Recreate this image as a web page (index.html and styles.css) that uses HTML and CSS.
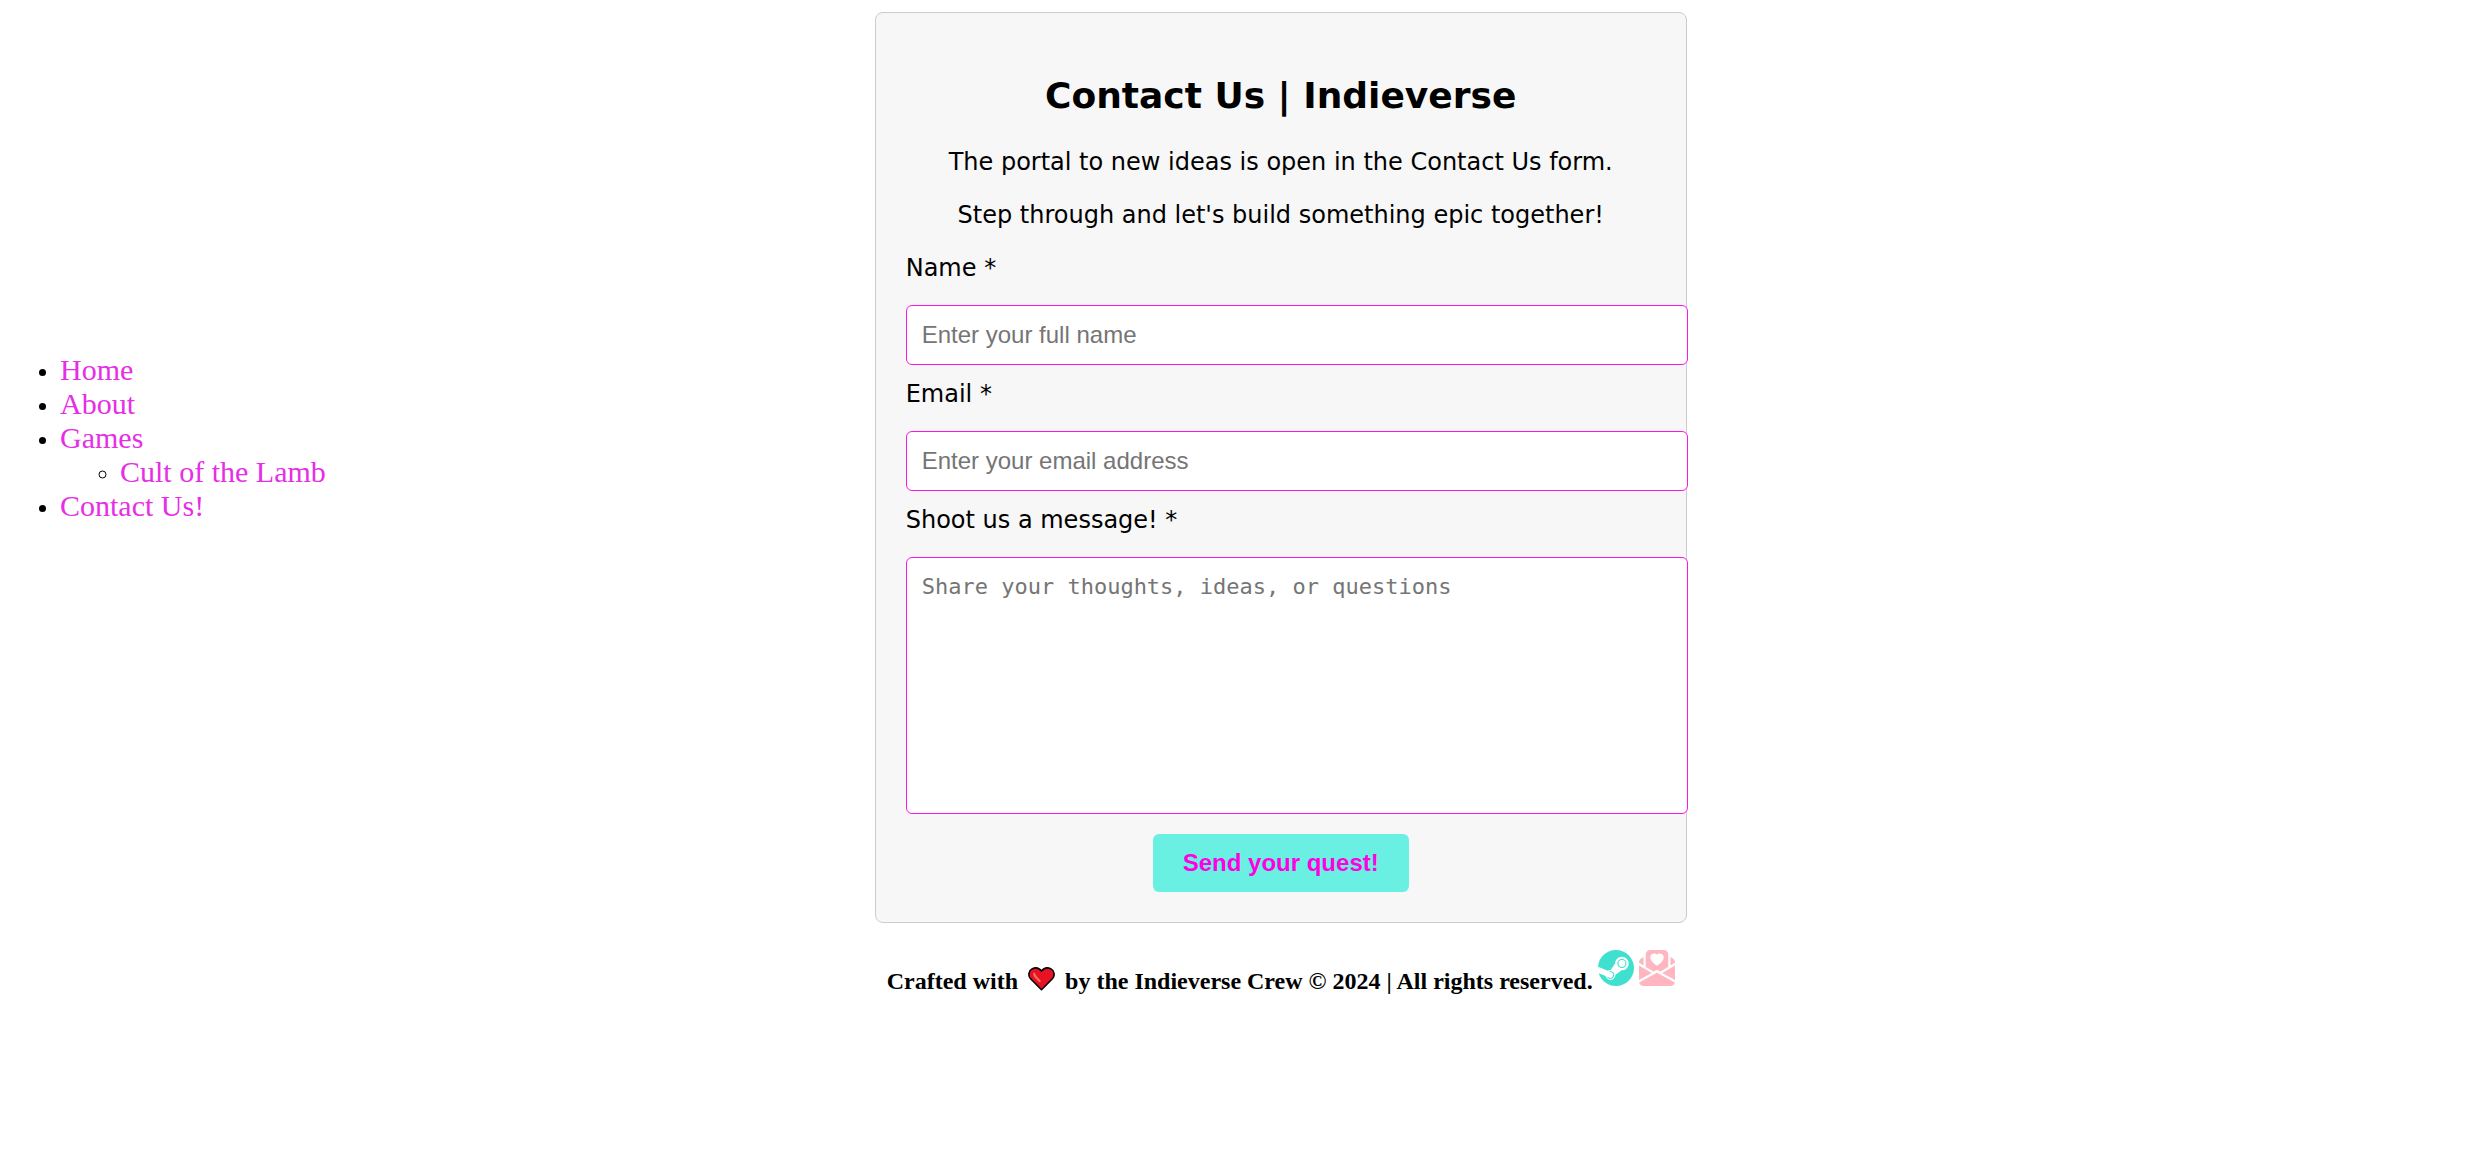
FILE: index.html
```html
<!DOCTYPE html>
<html lang="en">
<head>
  <meta charset="utf-8">
  <meta name="viewport" content="width=device-width, initial-scale=1">
  <title>Contact Us | Indieverse</title>
  <link rel="stylesheet" href="styles.css">
</head>
<body>
  <div class="page">
    <nav class="site-nav">
      <ul>
        <li><a href="#home">Home</a></li>
        <li><a href="#about">About</a></li>
        <li><a href="#games">Games</a>
          <ul>
            <li><a href="#cult-of-the-lamb">Cult of the Lamb</a></li>
          </ul>
        </li>
        <li><a href="#contact">Contact Us!</a></li>
      </ul>
    </nav>

    <main class="card">
      <h1>Contact Us | Indieverse</h1>
      <p>The portal to new ideas is open in the Contact Us form.</p>
      <p>Step through and let's build something epic together!</p>
      <form class="contact-form">
        <label for="name">Name *</label>
        <input class="field" type="text" id="name" placeholder="Enter your full name" required>
        <label for="email">Email *</label>
        <input class="field" type="email" id="email" placeholder="Enter your email address" required>
        <label for="message">Shoot us a message! *</label>
        <textarea class="field message" id="message" placeholder="Share your thoughts, ideas, or questions" required></textarea>
        <button class="send" type="submit">Send your quest!</button>
      </form>
    </main>

    <footer class="site-footer">
      <span>Crafted with</span>
      <svg class="heart" viewBox="0 0 27 24" role="img" aria-label="love">
        <path d="M13.500 22.700 2.600 11.800C-.3 8.700.7 3.600 4 1.900 7.400.2 11.200 1 13.500 4.100 15.800 1 19.600.2 23 1.900c3.300 1.700 4.300 6.800 1.400 9.900z" fill="#e81224" stroke="#000" stroke-width="1.600" stroke-linejoin="round"/>
        <path d="M6.200 6.800c.1 1.500.8 2.400 1.800 3.400l3.600 3.700" fill="none" stroke="#f4715a" stroke-width="2.200" stroke-linecap="round"/>
      </svg>
      <span>by the Indieverse Crew © 2024 | All rights reserved.</span>
      <a class="icon steam" href="#steam" aria-label="Steam">
        <svg viewBox="0 0 16 16" fill="currentColor">
          <path d="M.329 10.333A8.010 8.010 0 0 0 7.990 16C12.414 16 16 12.418 16 8s-3.586-8-8.009-8A8.006 8.006 0 0 0 0 7.468l.003.006 4.304 1.769A2.198 2.198 0 0 1 5.620 8.880l1.960-2.844-.001-.04a3.046 3.046 0 0 1 3.042-3.043 3.046 3.046 0 0 1 3.042 3.043 3.047 3.047 0 0 1-3.111 3.044l-2.804 2a2.223 2.223 0 0 1-3.075 2.110 2.217 2.217 0 0 1-1.312-1.568L.33 10.333Z"/>
          <path d="M4.868 12.683a1.715 1.715 0 0 0 1.318-3.165 1.705 1.705 0 0 0-1.263-.02l1.023.424a1.261 1.261 0 1 1-.97 2.330l-.99-.41a1.700 1.700 0 0 0 .882.84Zm3.726-6.687a2.030 2.030 0 0 0 2.027 2.029 2.030 2.030 0 0 0 2.027-2.029 2.030 2.030 0 0 0-2.027-2.027 2.030 2.030 0 0 0-2.027 2.027Zm2.030-1.527a1.524 1.524 0 1 1-.002 3.048 1.524 1.524 0 0 1 .002-3.048Z"/>
        </svg>
      </a>
      <a class="icon mail" href="#mail" aria-label="Email">
        <svg viewBox="0 0 16 16" fill="currentColor">
          <path fill-rule="evenodd" d="m3 7.500 3.500 2L8 8.750l1.500.75 3.500-2V2a2 2 0 0 0-2-2H5a2 2 0 0 0-2 2v5.500ZM2 3.133l-.941.502A2 2 0 0 0 0 5.400v.313l2 1.173V3.133Zm12 3.753 2-1.173V5.400a2 2 0 0 0-1.059-1.765L14 3.133v3.753Zm-3.693 3.324L16 13.372V6.873l-5.693 3.337Zm5.634 4.274L8 10.072.059 14.484A2 2 0 0 0 2 16h12a2 2 0 0 0 1.941-1.516ZM5.693 10.210 0 13.372V6.873l5.693 3.337ZM8 1.982C9.664.309 13.825 3.236 8 7 2.175 3.236 6.336.31 8 1.982Z"/>
        </svg>
      </a>
    </footer>
  </div>
</body>
</html>
```
FILE: styles.css
```css
body {
  margin: 0;
  background: #fff;
  color: #000;
  font-family: "Liberation Serif", "Times New Roman", serif;
  font-size: 24px;
}

.page {
  display: grid;
  grid-template-columns: 28fr minmax(0, 812px) 25fr;
  row-gap: 27px;
  padding: 12px;
}

.site-nav {
  align-self: center;
  padding-bottom: 56px;
  line-height: 34px;
}

.site-nav ul {
  margin: 0;
  padding-left: 48px;
}

.site-nav ul ul {
  padding-left: 60px;
}

.site-nav a {
  color: #e62ee6;
  font-size: 30px;
  line-height: 30px;
  text-decoration: none;
}

.card {
  padding: 30px;
  border: 1px solid #ccc;
  border-radius: 8px;
  background: #f7f7f7;
  font-family: Verdana, "DejaVu Sans", sans-serif;
  line-height: 29px;
}

.card h1 {
  margin: 31px 0;
  font-size: 36px;
  line-height: 43px;
  text-align: center;
}

.card p {
  margin: 24px 0;
  text-align: center;
}

.contact-form {
  display: flex;
  flex-direction: column;
  align-items: flex-start;
}

.field {
  box-sizing: content-box;
  width: 100%;
  height: 28px;
  margin: 22px 0 15px;
  padding: 15px;
  border: 1px solid #ff14e8;
  border-radius: 6px;
  background: #fff;
  font-family: "Liberation Sans", Arial, sans-serif;
  font-size: 24px;
}

.field::placeholder {
  color: #757575;
}

.message {
  height: 225px;
  margin-bottom: 20px;
  font-family: Consolas, "DejaVu Sans Mono", monospace;
  font-size: 22px;
  line-height: 28px;
  resize: none;
}

.send {
  align-self: center;
  padding: 15px 30px;
  border: 0;
  border-radius: 6px;
  background: #69f0e2;
  color: #ff00e1;
  font-family: "Liberation Sans", Arial, sans-serif;
  font-size: 24px;
  font-weight: bold;
  line-height: 28px;
}

.site-footer {
  grid-column: 2;
  display: flex;
  justify-content: center;
  align-items: flex-start;
  gap: 5px;
  font-weight: bold;
  line-height: 28px;
  white-space: nowrap;
}

.site-footer span,
.heart {
  margin-top: 17px;
}

.heart {
  width: 27px;
  height: 24px;
  padding: 0 5px;
}

.icon svg {
  display: block;
  width: 36px;
  height: 36px;
}

.steam {
  color: #40e0d0;
}

.mail {
  color: #ffb6c1;
}
```
